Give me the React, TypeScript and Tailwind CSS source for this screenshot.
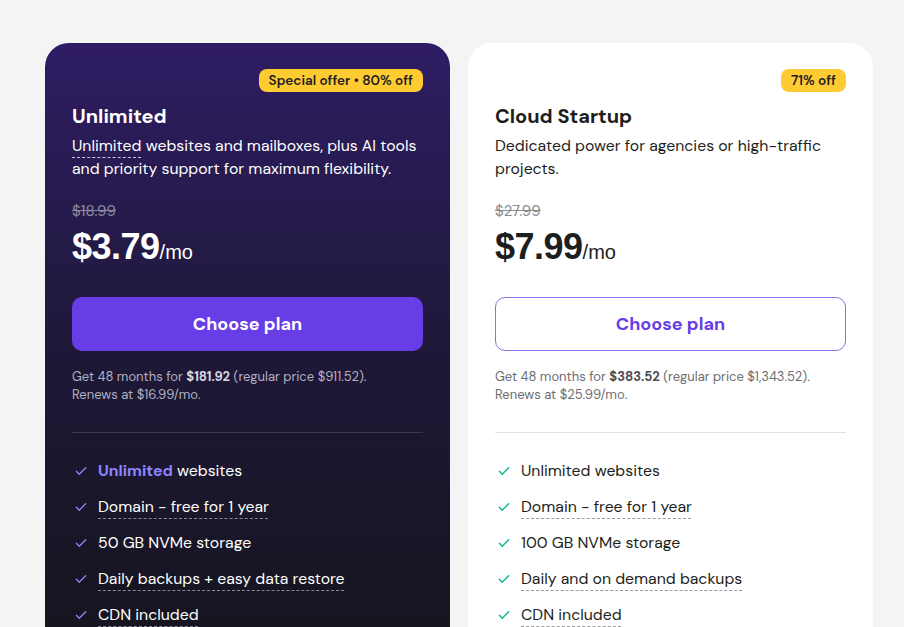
import React from "react";

const font = { fontFamily: "'DM Sans', Lato, 'Noto Sans', sans-serif" };

function Check({ color }: { color: string }) {
  return (
    <svg width="14" height="14" viewBox="0 0 24 24" fill="none" stroke={color} strokeWidth="2.2" strokeLinecap="round" strokeLinejoin="round" className="shrink-0">
      <path d="M4 12.5l5 5L20 6.5" />
    </svg>
  );
}

type Feature = { text: React.ReactNode; dashed?: boolean };

function Card({
  dark,
  badge,
  title,
  desc,
  oldPrice,
  price,
  total,
  regular,
  renew,
  features,
}: {
  dark: boolean;
  badge: string;
  title: string;
  desc: React.ReactNode;
  oldPrice: string;
  price: string;
  total: string;
  regular: string;
  renew: string;
  features: Feature[];
}) {
  return (
    <div
      className={
        dark
          ? "w-[405px] shrink-0 rounded-[24px] bg-gradient-to-b from-[#2f1c64] via-[#1e1838] to-[#15141c] px-[27px] pt-[26px] pb-10 text-white"
          : "w-[405px] shrink-0 rounded-[24px] bg-white px-[27px] pt-[26px] pb-10 text-[#1d1e20]"
      }
    >
      <div className="flex justify-end">
        <span className="h-[23px] rounded-[8px] bg-[#ffcb33] px-[10px] text-[13.5px] font-semibold leading-[23px] text-[#1d1e20]">
          {badge}
        </span>
      </div>
      <div className="mt-[10px] text-[20px] font-bold leading-[28px]">{title}</div>
      <div className={dark ? "mt-[4px] text-[15.8px] leading-[23px] text-white" : "mt-[4px] text-[15.8px] leading-[23px] text-[#1d1e20]"}>
        {desc}
      </div>
      <div className={dark ? "mt-[21px] text-[15px] leading-[20px] text-[#8e8aa0] line-through" : "mt-[21px] text-[15px] leading-[20px] text-[#8a8a8e] line-through"}>
        {oldPrice}
      </div>
      <div className="mt-[6px] flex h-[40px] items-baseline overflow-visible" style={{ fontFamily: "'Liberation Sans', Arial, sans-serif" }}>
        <span className="text-[36px] font-bold leading-[40px] tracking-[-0.5px]">{price}</span>
        <span className="text-[20px] leading-[20px]">/mo</span>
      </div>
      <button
        className={
          dark
            ? "mt-[30px] flex h-[54px] w-full items-center justify-center rounded-[10px] bg-[#673de6] text-[18px] font-bold text-white"
            : "mt-[30px] flex h-[54px] w-full items-center justify-center rounded-[10px] border border-[#8c6cf0] bg-white text-[18px] font-bold text-[#673de6]"
        }
      >
        Choose plan
      </button>
      <div className={dark ? "mt-[17px] text-[13px] leading-[18px] text-[#b3b0c2]" : "mt-[17px] text-[13px] leading-[18px] text-[#6d6d72]"}>
        Get 48 months for <b className={dark ? "font-bold text-[#d8d6e2]" : "font-bold text-[#4a4a4f]"}>{total}</b> (regular price {regular}).
        <br />
        Renews at {renew}.
      </div>
      <div className={dark ? "mt-[28px] h-px bg-[#3b3850]" : "mt-[28px] h-px bg-[#e2e2e5]"} />
      <ul className="mt-[26px] flex flex-col gap-[12px]">
        {features.map((f, i) => (
          <li key={i} className="flex items-center gap-[10px] pl-[2px] text-[15.8px] leading-[24px]">
            <Check color={dark ? "#8c85ff" : "#00b090"} />
            <span
              className={
                f.dashed
                  ? dark
                    ? "underline decoration-dashed decoration-[#8a879a] decoration-1 underline-offset-[6px]"
                    : "underline decoration-dashed decoration-[#9a9a9e] decoration-1 underline-offset-[6px]"
                  : ""
              }
            >
              {f.text}
            </span>
          </li>
        ))}
      </ul>
    </div>
  );
}

export default function App() {
  return (
    <div className="h-[627px] w-[904px] overflow-hidden bg-[#f4f4f4]" style={font}>
      <div className="flex gap-[18px] pl-[45px] pt-[43px]">
        <Card
          dark
          badge="Special offer • 80% off"
          title="Unlimited"
          desc={
            <>
              <span className="underline decoration-dashed decoration-[#c9c6d6] decoration-1 underline-offset-[6px]">Unlimited</span> websites and mailboxes, plus AI tools and priority support for maximum flexibility.
            </>
          }
          oldPrice="$18.99"
          price="$3.79"
          total="$181.92"
          regular="$911.52"
          renew="$16.99/mo"
          features={[
            { text: <><span className="font-bold text-[#8c85ff]">Unlimited</span> websites</> },
            { text: "Domain - free for 1 year", dashed: true },
            { text: "50 GB NVMe storage" },
            { text: "Daily backups + easy data restore", dashed: true },
            { text: "CDN included", dashed: true },
          ]}
        />
        <Card
          dark={false}
          badge="71% off"
          title="Cloud Startup"
          desc="Dedicated power for agencies or high-traffic projects."
          oldPrice="$27.99"
          price="$7.99"
          total="$383.52"
          regular="$1,343.52"
          renew="$25.99/mo"
          features={[
            { text: "Unlimited websites" },
            { text: "Domain - free for 1 year", dashed: true },
            { text: "100 GB NVMe storage" },
            { text: "Daily and on demand backups", dashed: true },
            { text: "CDN included", dashed: true },
          ]}
        />
      </div>
    </div>
  );
}
